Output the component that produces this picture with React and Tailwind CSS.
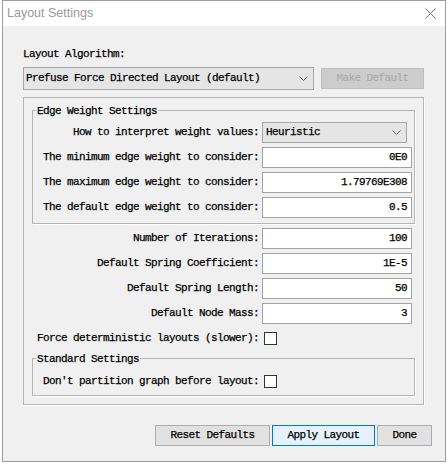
const mono = "font-['Liberation_Mono',monospace] text-[11px] tracking-[-0.6px] text-black [-webkit-text-stroke:0.25px_#000]";

function Chevron() {
  return (
    <svg width="9" height="5" viewBox="0 0 9 5" className="shrink-0">
      <path d="M0.5 0.5 L4.5 4.5 L8.5 0.5" fill="none" stroke="#606060" strokeWidth="1" />
    </svg>
  );
}

function Field({ value }) {
  return (
    <div className="h-[21px] w-[150px] bg-white border border-[#a3a3a3] flex items-center justify-end pr-[4px]">
      {value}
    </div>
  );
}

function Check() {
  return <div className="ml-[2px] w-[13px] h-[13px] bg-white border border-[#333333]" />;
}

function Label({ children }) {
  return <div className="text-right whitespace-pre">{children}</div>;
}

function Group({ title, className, children }) {
  return (
    <div className={"relative border border-[#b5b5b5] shadow-[1px_1px_0_#ffffff] " + className}>
      <span className="absolute top-[-7px] left-[3px] px-[1px] bg-[#f0f0f0] leading-[14px]">{title}</span>
      {children}
    </div>
  );
}

export default function App() {
  return (
    <div className="w-[448px] h-[465px] bg-white pl-[2px] overflow-hidden">
      <div className="w-[444px] h-[462px] border border-[#9c9c9c] bg-[#f0f0f0] flex flex-col">
        <div className="h-[25px] bg-white flex items-center justify-between pl-[4px] pr-[9px]">
          <span className="font-['Liberation_Sans',sans-serif] text-[12.5px] text-[#999999]">Layout Settings</span>
          <svg width="11" height="11" viewBox="0 0 11 11">
            <path d="M0.5 0.5 L10.5 10.5 M10.5 0.5 L0.5 10.5" stroke="#7a7a7a" strokeWidth="1" />
          </svg>
        </div>

        <div className={"flex flex-col pl-[20px] pr-[21px] pt-[21px] " + mono}>
          <div className="h-[14px] leading-[14px]">Layout Algorithm:</div>

          <div className="mt-[6px] flex items-center justify-between">
            <div className="h-[23px] w-[291px] bg-[#e5e5e5] border border-[#a6a6a6] flex items-center justify-between pl-[2px] pr-[5px]">
              <span>Prefuse Force Directed Layout (default)</span>
              <Chevron />
            </div>
            <div className="h-[21px] w-[103px] bg-[#cccccc] border border-[#bfbfbf] flex items-center justify-center text-[#a8a8a8] [-webkit-text-stroke:0px]">
              Make Default
            </div>
          </div>

          <div className="mt-[7px] border border-[#b5b5b5] shadow-[1px_1px_0_#ffffff] px-[8px] pt-[12px] pb-[8px] flex flex-col">
            <Group title="Edge Weight Settings" className="pt-[11px] pb-[5px] pr-[2px]">
              <div className="grid grid-cols-[1fr_150px] gap-x-[3px] gap-y-[4px] auto-rows-[21px] items-center">
                <Label>How to interpret weight values:</Label>
                <div className="h-[21px] w-[145px] bg-[#e5e5e5] border border-[#a6a6a6] flex items-center justify-between pl-[3px] pr-[5px]">
                  <span>Heuristic</span>
                  <Chevron />
                </div>
                <Label>The minimum edge weight to consider:</Label>
                <Field value="0E0" />
                <Label>The maximum edge weight to consider:</Label>
                <Field value="1.79769E308" />
                <Label>The default edge weight to consider:</Label>
                <Field value="0.5" />
              </div>
            </Group>

            <div className="mt-[4px] pr-[3px] grid grid-cols-[1fr_150px] gap-x-[3px] gap-y-[4px] auto-rows-[21px] items-center">
              <Label>Number of Iterations:</Label>
              <Field value="100" />
              <Label>Default Spring Coefficient:</Label>
              <Field value="1E-5" />
              <Label>Default Spring Length:</Label>
              <Field value="50" />
              <Label>Default Node Mass:</Label>
              <Field value="3" />
              <Label>Force deterministic layouts (slower):</Label>
              <Check />
            </div>

            <Group title="Standard Settings" className="mt-[9px] pt-[12px] pb-[3px] pr-[2px]">
              <div className="grid grid-cols-[1fr_150px] gap-x-[3px] auto-rows-[21px] items-center">
                <Label>Don't partition graph before layout:</Label>
                <Check />
              </div>
            </Group>
          </div>

          <div className="mt-[20px] mr-[-8px] flex justify-end gap-[2px]">
            <div className="h-[21px] w-[115px] bg-[#e1e1e1] border border-[#adadad] flex items-center justify-center">Reset Defaults</div>
            <div className="h-[21px] w-[103px] bg-[#e5f1fb] border border-[#0078d7] flex items-center justify-center">Apply Layout</div>
            <div className="h-[21px] w-[55px] bg-[#e1e1e1] border border-[#adadad] flex items-center justify-center">Done</div>
          </div>
        </div>
      </div>
    </div>
  );
}
